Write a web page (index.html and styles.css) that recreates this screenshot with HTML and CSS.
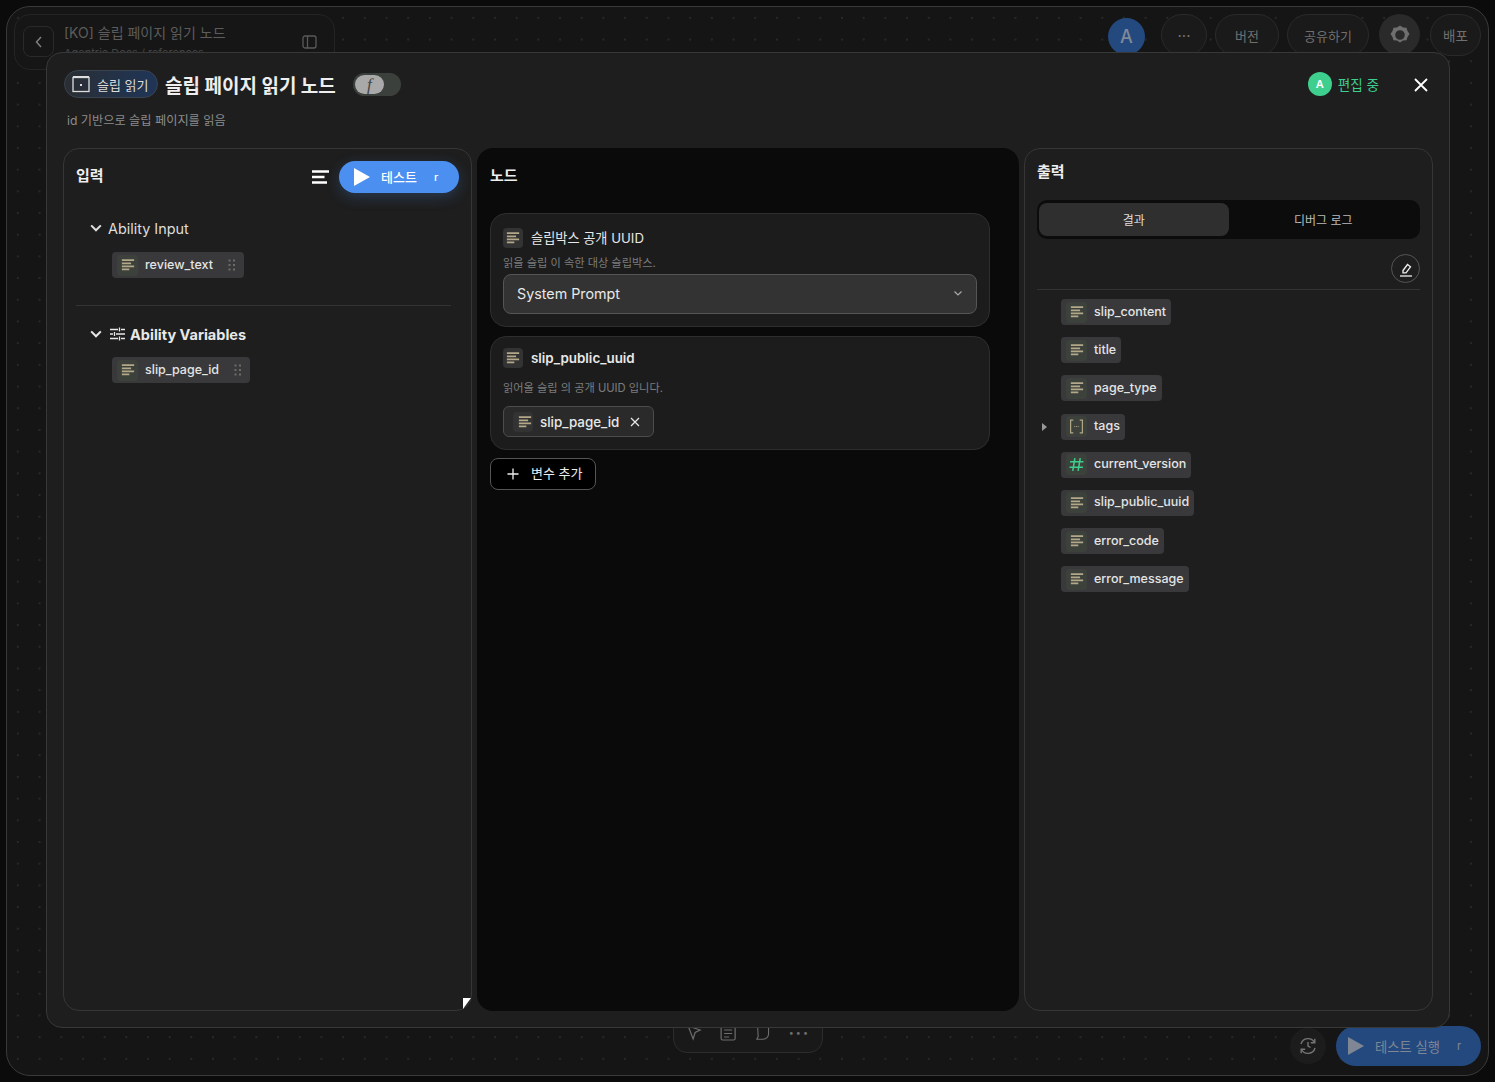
FILE: index.html
```html
<!DOCTYPE html>
<html lang="ko">
<head>
    <meta charset="UTF-8">
    <meta name="viewport" content="width=device-width, initial-scale=1.0">
    <title>슬립 페이지 읽기 노드</title>
    <link rel="stylesheet" href="styles.css">
</head>
<body>
    <svg class="defs" width="0" height="0">
        <symbol id="i-lines" viewBox="0 0 16 16">
            <path d="M1 2.500h14M1 6h10.500M1 9.500h14M1 13h8.500" fill="none" stroke="currentColor" stroke-width="2"/>
        </symbol>
        <symbol id="i-chevron" viewBox="0 0 16 16">
            <path d="M2.500 5l5.500 5.500L13.500 5" fill="none" stroke="currentColor" stroke-width="2.400"/>
        </symbol>
        <symbol id="i-grip" viewBox="0 0 8 12">
            <g fill="currentColor">
                <rect x="0.500" y="0.500" width="2" height="2"/><rect x="5" y="0.500" width="2" height="2"/>
                <rect x="0.500" y="5" width="2" height="2"/><rect x="5" y="5" width="2" height="2"/>
                <rect x="0.500" y="9.500" width="2" height="2"/><rect x="5" y="9.500" width="2" height="2"/>
            </g>
        </symbol>
        <symbol id="i-play" viewBox="0 0 16 18">
            <path d="M0 0l16 9L0 18z" fill="currentColor"/>
        </symbol>
    </svg>

    <div class="frame">
        <header class="topbar">
            <div class="doc-box">
                <button class="back-btn">
                    <svg width="14" height="14" viewBox="0 0 14 14"><path d="M9 2L4.500 7 9 12" fill="none" stroke="currentColor" stroke-width="1.500"/></svg>
                </button>
                <div class="doc-text">
                    <div class="doc-title">[KO] 슬립 페이지 읽기 노드</div>
                    <div class="doc-path">Agentric Docs / references</div>
                </div>
                <svg class="doc-side" width="15" height="14" viewBox="0 0 15 14"><rect x="1" y="1" width="13" height="12" rx="2" fill="none" stroke="currentColor" stroke-width="1.300"/><path d="M5.500 1v12" stroke="currentColor" stroke-width="1.300"/></svg>
            </div>
            <div class="top-actions">
                <div class="top-avatar">A</div>
                <button class="top-btn top-more">···</button>
                <button class="top-btn top-version">버전</button>
                <button class="top-btn top-share">공유하기</button>
                <button class="top-btn top-gear">
                    <svg width="22" height="22" viewBox="0 0 22 22"><path d="M11 1.500l3 2 3.500.2 1 3.300 2 3-2 3-1 3.300-3.500.2-3 2-3-2-3.500-.2-1-3.300-2-3 2-3 1-3.300 3.500-.2z M11 6.200a4.800 4.800 0 1 0 0 9.600 4.800 4.800 0 0 0 0-9.600z" fill="currentColor" fill-rule="evenodd"/></svg>
                </button>
                <button class="top-btn top-deploy">배포</button>
            </div>
        </header>

        <footer class="bottombar">
            <button class="history-btn">
                <svg width="20" height="20" viewBox="0 0 20 20" fill="none" stroke="currentColor" stroke-width="1.400"><path d="M3 8a7.300 7.300 0 0 1 13.500-1.500M17 12a7.300 7.300 0 0 1-13.500 1.500"/><path d="M16.800 2.800v4h-4M3.200 17.200v-4h4"/><path d="M10 6v4l2.500 1.500"/></svg>
            </button>
            <button class="run-btn">
                <svg width="16" height="18"><use href="#i-play"/></svg>
                <span>테스트 실행</span>
                <span class="run-key">r</span>
            </button>
        </footer>

        <div class="tools">
            <svg width="18" height="18" viewBox="0 0 16 18" fill="none" stroke="currentColor" stroke-width="1.200"><path d="M2 2l12 4-5 2.500L7 15z"/></svg>
            <svg width="18" height="18" viewBox="0 0 16 18" fill="none" stroke="currentColor" stroke-width="1.200"><rect x="1" y="2" width="14" height="14" rx="1.500"/><path d="M4 6h8M4 9.500h8M4 13h5"/></svg>
            <svg width="18" height="18" viewBox="0 0 18 18" fill="none" stroke="currentColor" stroke-width="1.200"><path d="M3 3h12v7a6 6 0 0 1-6 6H2l1.500-3z"/></svg>
            <span class="tools-more">•••</span>
        </div>
    </div>

    <div class="modal">
        <div class="modal-head">
            <div class="modal-title-row">
                <div class="type-pill">
                    <svg width="18" height="17" viewBox="0 0 18 17" fill="none" stroke="currentColor" stroke-width="1.300"><rect x="1" y="1.500" width="16" height="14"/><path d="M1 1h16" stroke-width="2"/><rect x="8" y="8" width="2" height="2" fill="currentColor" stroke="none"/></svg>
                    <span>슬립 읽기</span>
                </div>
                <h1 class="modal-title">슬립 페이지 읽기 노드</h1>
                <div class="fn-toggle"><span class="fn-knob">f</span></div>
                <div class="editing">
                    <span class="editing-avatar">A</span>
                    <span class="editing-text">편집 중</span>
                </div>
                <button class="close-btn">
                    <svg width="16" height="16" viewBox="0 0 16 16"><path d="M2 2l12 12M14 2L2 14" fill="none" stroke="currentColor" stroke-width="1.800"/></svg>
                </button>
            </div>
            <p class="modal-desc">id 기반으로 슬립 페이지를 읽음</p>
        </div>

        <div class="columns">
            <section class="panel panel-input">
                <div class="input-head">
                    <h2 class="panel-title">입력</h2>
                    <svg class="list-icon" width="17" height="14" viewBox="0 0 17 14"><path d="M0 1.500h17M0 7h12.500M0 12.500h15" fill="none" stroke="currentColor" stroke-width="2.400"/></svg>
                    <button class="test-btn">
                        <svg width="16" height="18"><use href="#i-play"/></svg>
                        <span class="test-label">테스트</span>
                        <span class="test-key">r</span>
                    </button>
                </div>

                <div class="group">
                    <div class="group-head">
                        <svg width="14" height="14"><use href="#i-chevron"/></svg>
                        <span>Ability Input</span>
                    </div>
                    <div class="chip chip-drag">
                        <span class="chip-icon"><svg width="14" height="14"><use href="#i-lines"/></svg></span>
                        <span>review_text</span>
                        <svg class="grip" width="8" height="12"><use href="#i-grip"/></svg>
                    </div>
                </div>

                <div class="group group-vars">
                    <div class="group-head group-head-bold">
                        <svg width="14" height="14"><use href="#i-chevron"/></svg>
                        <svg class="vars-icon" width="15" height="14" viewBox="0 0 15 14" fill="none" stroke="currentColor" stroke-width="1.300"><path d="M0 2.500h8M11 2.500h4M0 7h3M6 7h9M0 11.500h8M11 11.500h4M9.500 0.500v4M4.500 5v4M9.500 9.500v4"/></svg>
                        <span>Ability Variables</span>
                    </div>
                    <div class="chip chip-drag">
                        <span class="chip-icon"><svg width="14" height="14"><use href="#i-lines"/></svg></span>
                        <span>slip_page_id</span>
                        <svg class="grip" width="8" height="12"><use href="#i-grip"/></svg>
                    </div>
                </div>
                <span class="corner-mark"></span>
            </section>

            <section class="panel panel-node">
                <h2 class="panel-title">노드</h2>
                <div class="node-card">
                    <div class="field-head field-head-plain">
                        <span class="field-icon"><svg width="14" height="14"><use href="#i-lines"/></svg></span>
                        <span>슬립박스 공개 UUID</span>
                    </div>
                    <p class="field-desc">읽을 슬립 이 속한 대상 슬립박스.</p>
                    <div class="select-box">
                        <span>System Prompt</span>
                        <svg width="10" height="10" viewBox="0 0 10 10"><path d="M1.500 3.500L5 7l3.500-3.500" fill="none" stroke="currentColor" stroke-width="1.200"/></svg>
                    </div>
                </div>
                <div class="node-card">
                    <div class="field-head field-head-bold">
                        <span class="field-icon"><svg width="14" height="14"><use href="#i-lines"/></svg></span>
                        <span>slip_public_uuid</span>
                    </div>
                    <p class="field-desc field-desc-gap">읽어올 슬립 의 공개 UUID 입니다.</p>
                    <div class="value-tag">
                        <span class="field-icon"><svg width="14" height="14"><use href="#i-lines"/></svg></span>
                        <span>slip_page_id</span>
                        <svg width="10" height="10" viewBox="0 0 10 10"><path d="M1 1l8 8M9 1L1 9" fill="none" stroke="currentColor" stroke-width="1.200"/></svg>
                    </div>
                </div>
                <button class="add-btn">
                    <svg width="12" height="12" viewBox="0 0 12 12"><path d="M6 0.500v11M0.500 6h11" fill="none" stroke="currentColor" stroke-width="1.300"/></svg>
                    <span>변수 추가</span>
                </button>
            </section>

            <section class="panel panel-output">
                <h2 class="panel-title">출력</h2>
                <div class="tabs">
                    <div class="tab tab-active">결과</div>
                    <div class="tab">디버그 로그</div>
                </div>
                <div class="edit-row">
                    <button class="edit-btn">
                        <svg width="16" height="16" viewBox="0 0 16 16" fill="none" stroke="currentColor" stroke-width="1.300"><path d="M5 9.500l4.500-6 3 2.300-4.500 6H5z"/><path d="M2 15h12"/></svg>
                    </button>
                </div>
                <div class="output-list">
                    <div class="chip"><span class="chip-icon"><svg width="14" height="14"><use href="#i-lines"/></svg></span><span>slip_content</span></div>
                    <div class="chip"><span class="chip-icon"><svg width="14" height="14"><use href="#i-lines"/></svg></span><span>title</span></div>
                    <div class="chip"><span class="chip-icon"><svg width="14" height="14"><use href="#i-lines"/></svg></span><span>page_type</span></div>
                    <div class="chip">
                        <svg class="caret" width="5" height="8" viewBox="0 0 5 8"><path d="M0 0l5 4-5 4z" fill="currentColor"/></svg>
                        <span class="chip-icon"><svg width="15" height="15" viewBox="0 0 14 14" fill="none" stroke="currentColor" stroke-width="1.100"><path d="M4 1H1.500v12H4M10 1h2.500v12H10"/><path d="M5 7h.8M6.600 7h.8M8.200 7h.8"/></svg></span>
                        <span>tags</span>
                    </div>
                    <div class="chip"><span class="chip-icon chip-icon-num"><svg width="15" height="15" viewBox="0 0 14 14" fill="none" stroke="currentColor" stroke-width="1.400"><path d="M5.500 1L3.500 13M10.500 1L8.500 13M1 4.500h12.500M0.500 9.500H13"/></svg></span><span>current_version</span></div>
                    <div class="chip"><span class="chip-icon"><svg width="14" height="14"><use href="#i-lines"/></svg></span><span>slip_public_uuid</span></div>
                    <div class="chip"><span class="chip-icon"><svg width="14" height="14"><use href="#i-lines"/></svg></span><span>error_code</span></div>
                    <div class="chip"><span class="chip-icon"><svg width="14" height="14"><use href="#i-lines"/></svg></span><span>error_message</span></div>
                </div>
            </section>
        </div>
    </div>
</body>
</html>
```

FILE: styles.css
```css
* {
    margin: 0;
    padding: 0;
    box-sizing: border-box;
    font-family: Inter, "Noto Sans CJK KR", sans-serif;
}

html, body {
    height: 100%;
    overflow: hidden;
}

body {
    background-color: #0b0b0b;
    padding: 6px;
    color: #eee;
}

button {
    border: none;
    background: none;
    color: inherit;
    display: flex;
    align-items: center;
    justify-content: center;
}

.defs {
    position: absolute;
}

/* page behind the modal */
.frame {
    position: relative;
    height: 1070px;
    border: 1px solid #3a3a3a;
    border-radius: 24px;
    padding: 7px;
    display: flex;
    flex-direction: column;
    justify-content: space-between;
    background-color: #151515;
    background-image: radial-gradient(#282828 1px, transparent 1px);
    background-size: 21.700px 21.700px;
}

.topbar {
    display: flex;
    justify-content: space-between;
    align-items: flex-start;
}

.doc-box {
    width: 321px;
    height: 56px;
    border: 1px solid #242424;
    border-radius: 16px;
    padding: 11px 17px 0 8px;
    display: flex;
    gap: 10px;
    background-color: #161616;
}

.back-btn {
    width: 31px;
    height: 31px;
    border: 1px solid #2a2a2a;
    border-radius: 8px;
    color: #808080;
}

.doc-text {
    flex: 1;
    margin-top: -3px;
}

.doc-title {
    font-size: 14px;
    line-height: 20px;
    color: #5c5c5c;
}

.doc-path {
    margin-top: 3px;
    font-size: 11px;
    color: #444;
}

.doc-side {
    margin-top: 9px;
    color: #5a5a5a;
}

.top-actions {
    display: flex;
    align-items: flex-start;
}

.top-avatar {
    width: 37px;
    height: 37px;
    margin: 4px 16px 0 0;
    border-radius: 50%;
    background-color: #24497f;
    color: #7f8a99;
    font-size: 18px;
    font-weight: 500;
    display: flex;
    align-items: center;
    justify-content: center;
}

.top-btn {
    height: 42px;
    border: 1px solid #2a2a2a;
    border-radius: 21px;
    background-color: #1a1a1a;
    color: #6f6f6f;
    font-size: 13px;
}

.top-more {
    width: 46px;
    margin-right: 8px;
    font-size: 15px;
}

.top-version {
    width: 64px;
    margin-right: 8px;
}

.top-share {
    width: 82px;
    margin-right: 10px;
}

.top-gear {
    width: 41px;
    height: 41px;
    margin-right: 10px;
    background-color: #2a2a2a;
    border: none;
}

.top-deploy {
    width: 51px;
    font-size: 13.500px;
}

.bottombar {
    display: flex;
    justify-content: flex-end;
    align-items: center;
    gap: 10px;
    padding-bottom: 2px;
}

.history-btn {
    width: 36px;
    height: 36px;
    border-radius: 50%;
    background-color: #1c1c1c;
    color: #757575;
}

.run-btn {
    width: 145px;
    height: 40px;
    border-radius: 20px;
    padding: 0 12px;
    background-color: #24497f;
    color: #7f8794;
    font-size: 13.300px;
    gap: 11px;
    justify-content: flex-start;
    white-space: nowrap;
}

.run-key {
    margin-left: 6px;
    font-size: 11px;
}

.tools {
    position: absolute;
    left: 666px;
    top: 1012px;
    width: 150px;
    height: 34px;
    padding: 0 12px 10px;
    border: 1px solid #2c2c2c;
    border-radius: 0 0 14px 14px;
    background-color: #191919;
    color: #6e6e6e;
    display: flex;
    align-items: flex-end;
    gap: 18px;
}

.tools-more {
    font-size: 9px;
    letter-spacing: 2px;
    line-height: 18px;
}

/* modal */
.modal {
    position: absolute;
    left: 46px;
    top: 52px;
    width: 1404px;
    height: 976px;
    border: 1px solid #383838;
    border-radius: 16px;
    padding: 16px 16px 16px;
    background-color: #1e1e1e;
    display: flex;
    flex-direction: column;
}

.modal-title-row {
    display: flex;
    align-items: center;
    height: 30px;
}

.type-pill {
    width: 94px;
    height: 28px;
    margin-left: 1px;
    margin-right: 7px;
    border: 1px solid #3a4350;
    border-radius: 14px;
    padding-left: 7px;
    display: flex;
    align-items: center;
    gap: 7px;
    background: linear-gradient(90deg, #2a2e33, #1f3558);
    font-size: 13px;
    color: #ddd;
}

.modal-title {
    font-size: 19px;
    font-weight: 700;
    margin-right: 17px;
}

.fn-toggle {
    width: 48px;
    height: 23px;
    border-radius: 12px;
    padding: 2px;
    background-color: #3c403c;
}

.fn-knob {
    display: block;
    width: 29px;
    height: 19px;
    border-radius: 10px;
    background-color: #a9a9a9;
    color: #444;
    font-family: "Liberation Serif", serif;
    font-style: italic;
    font-size: 17px;
    line-height: 19px;
    text-align: center;
}

.editing {
    margin-left: auto;
    display: flex;
    align-items: center;
    gap: 6px;
}

.editing-avatar {
    width: 24px;
    height: 24px;
    border-radius: 50%;
    background-color: #3ecf8e;
    color: #fff;
    font-size: 11px;
    font-weight: 600;
    display: flex;
    align-items: center;
    justify-content: center;
}

.editing-text {
    font-size: 13.600px;
    color: #3ecf8e;
}

.close-btn {
    margin: 2px 4px 0 34px;
    color: #fff;
}

.modal-desc {
    margin: 13px 0 0 4px;
    height: 18px;
    font-size: 12.200px;
    line-height: 18px;
    color: #8c8c8c;
}

.columns {
    margin-top: 18px;
    flex: 1;
    display: grid;
    grid-template-columns: 409px 542px 409px;
    gap: 5px;
    min-height: 0;
}

.panel {
    position: relative;
    border-radius: 16px;
    padding: 12px;
}

.panel-input, .panel-output {
    border: 1px solid #363636;
    background-color: #1e1e1e;
}

.panel-node {
    background-color: #0a0a0a;
    padding: 16px 13px;
}

.panel-title {
    font-size: 15px;
    font-weight: 700;
    line-height: 24px;
}

/* input column */
.input-head {
    display: flex;
    align-items: center;
    height: 32px;
    margin-bottom: 25px;
}

.input-head .panel-title {
    flex: 1;
    margin-top: -3px;
}

.list-icon {
    color: #fff;
    margin-right: 10px;
}

.test-btn {
    flex-shrink: 0;
    width: 120px;
    height: 32px;
    border-radius: 16px;
    padding: 0 15px;
    background-color: #4b8ff0;
    box-shadow: 0 4px 14px rgba(75, 143, 240, 0.25);
    color: #fff;
    font-size: 13px;
    font-weight: 500;
    justify-content: flex-start;
    gap: 11px;
    white-space: nowrap;
}

.test-label {
    margin-bottom: 2px;
}

.test-key {
    margin-left: 6px;
    font-size: 11px;
}

.group {
    padding-left: 13px;
    padding-bottom: 27px;
}

.group-vars {
    padding-top: 18px;
    border-top: 1px solid #333;
    width: 375px;
}

.group-head {
    display: flex;
    align-items: center;
    gap: 5px;
    height: 20px;
    margin-bottom: 14px;
    font-size: 14.400px;
    color: #ddd;
}

.group-vars .group-head {
    margin-bottom: 13px;
}

.group-head-bold {
    font-weight: 700;
    color: #e8e8e8;
    font-size: 14.500px;
}

.vars-icon {
    margin-left: 2px;
}

.chip {
    position: relative;
    display: inline-flex;
    align-items: center;
    gap: 7px;
    height: 26px;
    padding: 0 5px;
    border-radius: 4px;
    background-color: #39393b;
    font-size: 12.500px;
    font-weight: 500;
    color: #e4e4e4;
}

.chip span + span {
    margin-bottom: 2px;
}

.chip-drag {
    margin-left: 23px;
    padding-right: 8px;
}

.chip-icon {
    width: 21px;
    height: 21px;
    border-radius: 4px;
    background-color: #3c423b;
    color: #b3a88a;
    display: flex;
    align-items: center;
    justify-content: center;
}

.chip-icon-num {
    color: #3ecf8e;
}

.grip {
    margin-left: 8px;
    color: #6d6d68;
}

.corner-mark {
    position: absolute;
    right: 0;
    bottom: 1px;
    width: 8px;
    height: 11px;
    background-color: #fff;
    clip-path: polygon(0 0, 100% 0, 0 100%);
}

/* node column */
.node-card {
    height: 114px;
    margin-top: 9px;
    border: 1px solid #2e2e2e;
    border-radius: 16px;
    padding: 13px 12px;
    background-color: #1c1c1c;
    width: 500px;
}

.panel-node .panel-title {
    margin-bottom: 25px;
}

.panel-node .panel-title + .node-card {
    margin-top: 0;
}

.field-head {
    display: flex;
    align-items: center;
    gap: 8px;
    height: 22px;
    font-size: 13.200px;
    color: #e8e8e8;
}

.field-head-plain span + span {
    margin-bottom: 2px;
}

.field-head-bold {
    font-weight: 600;
    font-size: 13.400px;
    margin-top: -3px;
}

.field-icon {
    width: 20px;
    height: 20px;
    border-radius: 4px;
    background-color: #333;
    color: #b3a88a;
    display: flex;
    align-items: center;
    justify-content: center;
}

.field-desc {
    font-size: 11.200px;
    line-height: 16px;
    margin-top: 6px;
    color: #7c7c7c;
}

.field-desc-gap {
    margin-top: 11px;
}

.select-box {
    height: 40px;
    margin-top: 3px;
    border: 1px solid #555;
    border-radius: 8px;
    padding: 0 13px 2px;
    display: flex;
    align-items: center;
    justify-content: space-between;
    background-color: #333;
    font-size: 14.300px;
    color: #e8e8e8;
}

.select-box svg {
    color: #aaa;
}

.value-tag {
    display: inline-flex;
    align-items: center;
    gap: 7px;
    height: 31px;
    margin-top: 10px;
    border: 1px solid #4a4d49;
    border-radius: 6px;
    padding: 0 13px 0 9px;
    background-color: #2a2a2a;
    font-size: 13.400px;
    font-weight: 500;
    color: #e8e8e8;
}

.value-tag svg:last-child {
    margin-left: 4px;
}

.add-btn {
    width: 106px;
    height: 32px;
    margin-top: 8px;
    border: 1px solid #555;
    border-radius: 8px;
    padding-left: 16px;
    background-color: #000;
    font-size: 13px;
    gap: 12px;
    justify-content: flex-start;
}

.add-btn span {
    margin-bottom: 3px;
}

/* output column */
.panel-output {
    padding-top: 11px;
}

.panel-output .panel-title {
    margin-bottom: 16px;
}

.tabs {
    display: grid;
    grid-template-columns: 1fr 1fr;
    height: 39px;
    padding: 3px 2px;
    border-radius: 10px;
    background-color: #0c0c0c;
    font-size: 12px;
}

.tab {
    display: flex;
    align-items: center;
    justify-content: center;
    color: #bbb;
    border-radius: 8px;
}

.tab-active {
    background-color: #2f2f2f;
    color: #ddd;
}

.edit-row {
    display: flex;
    justify-content: flex-end;
    padding: 15px 0 6px;
    border-bottom: 1px solid #333;
}

.edit-btn {
    width: 29px;
    height: 29px;
    border: 1px solid #555;
    border-radius: 50%;
    color: #f0f0f0;
}

.output-list {
    display: flex;
    flex-direction: column;
    align-items: flex-start;
    gap: 12.200px;
    padding: 9px 0 0 24px;
}

.caret {
    position: absolute;
    left: -19px;
    top: 9px;
    color: #999;
}
```
